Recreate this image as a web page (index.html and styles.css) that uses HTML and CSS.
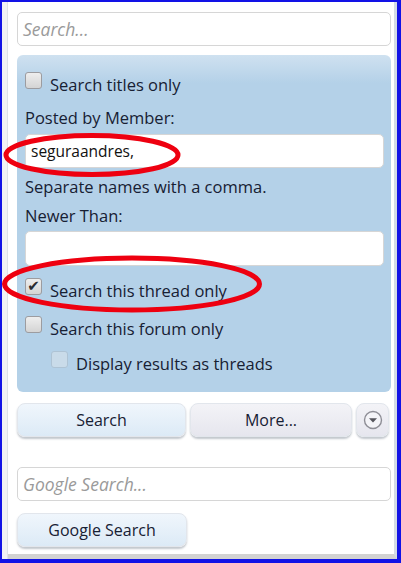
FILE: index.html
```html
<!DOCTYPE html>
<html>
<head>
<meta charset="utf-8">
<link rel="stylesheet" href="styles.css">
</head>
<body>
<div class="frame">
  <div class="strip"></div>
  <div class="menu">
    <div class="field search-field"><span class="ph">Search...</span></div>
    <div class="panel">
      <div class="check-row row-titles">
        <span class="box"></span><span class="label">Search titles only</span>
      </div>
      <div class="text-line posted">Posted by Member:</div>
      <div class="field member-field"><span class="val">seguraandres,</span></div>
      <div class="text-line hint">Separate names with a comma.</div>
      <div class="text-line newer">Newer Than:</div>
      <div class="field newer-field"></div>
      <div class="check-row row-thread">
        <span class="box checked">&#10004;</span><span class="label">Search this thread only</span>
      </div>
      <div class="check-row row-forum">
        <span class="box"></span><span class="label">Search this forum only</span>
      </div>
      <div class="check-row row-display">
        <span class="box disabled"></span><span class="label">Display results as threads</span>
      </div>
    </div>
    <div class="buttons">
      <div class="btn btn-primary btn-search">Search</div>
      <div class="btn btn-more">More...</div>
      <div class="btn btn-arrow">
        <svg width="20" height="20" viewBox="0 0 20 20">
          <circle cx="10" cy="10" r="8.5" fill="#f4f4f8" stroke="#8e8e96" stroke-width="1.4"/>
          <path d="M6 8.2 L14 8.2 L10 12.6 Z" fill="#55555c"/>
        </svg>
      </div>
    </div>
    <div class="field google-field"><span class="ph">Google Search...</span></div>
    <div class="btn btn-primary btn-google">Google Search</div>
  </div>
  <svg class="marks" width="401" height="563" viewBox="0 0 401 563">
    <ellipse cx="92" cy="155" rx="86" ry="19.5" fill="none" stroke="#ee0010" stroke-width="5"/>
    <ellipse cx="132" cy="284" rx="127.5" ry="26" fill="none" stroke="#ee0010" stroke-width="5"/>
  </svg>
</div>
</body>
</html>
```

FILE: styles.css
```css
html, body {
  margin: 0;
  padding: 0;
  background: #ffffff;
}

.frame {
  position: relative;
  width: 401px;
  height: 563px;
  box-sizing: border-box;
  border: 2px solid #1212e6;
  border-right-width: 4px;
  border-bottom-width: 4px;
  display: flex;
  background: #ffffff;
  font-family: "Open Sans", "Lato", sans-serif;
  font-size: 16.5px;
  color: #172033;
}

.strip {
  width: 5px;
  background: #f1f2f4;
  border-right: 1px solid #dde2e8;
  flex: none;
}

.menu {
  flex: 1;
  background: #ffffff;
  padding: 10px 3px 0 9px;
  border-right: 3px solid #d3dbe5;
  border-bottom: 5px solid #d2d2d2;
  display: flex;
  flex-direction: column;
}

.field {
  height: 34px;
  box-sizing: border-box;
  border: 1px solid #d6d6d6;
  border-radius: 5px;
  background: #ffffff;
  display: flex;
  align-items: center;
  padding-left: 5px;
}

.ph {
  font-style: italic;
  font-size: 17.5px;
  color: #9a9a9a;
}

.panel {
  margin-top: 9px;
  height: 337px;
  box-sizing: border-box;
  border-radius: 6px;
  background: linear-gradient(#cfe1f0 0px, #b4d1e8 28px, #b4d1e8 100%);
  padding: 17px 7px 0 8px;
  display: flex;
  flex-direction: column;
}

.check-row {
  display: flex;
  align-items: flex-start;
  height: 23px;
}

.box {
  width: 17px;
  height: 17px;
  box-sizing: border-box;
  border: 1px solid #9c9ca0;
  border-radius: 3px;
  background: linear-gradient(#eeeeee, #d4d4d4);
  flex: none;
  display: flex;
  align-items: center;
  justify-content: center;
  font-family: "DejaVu Sans", sans-serif;
  font-size: 15px;
  line-height: 1;
  color: #2a2a30;
}

.box.disabled {
  border-color: #aec3d4;
  background: #c9dbe9;
}

.label {
  margin-left: 8px;
  margin-top: 3px;
  line-height: 20px;
  white-space: nowrap;
}

.text-line {
  line-height: 20px;
  white-space: nowrap;
}

.posted { margin-top: 13px; }
.member-field { margin-top: 6px; }
.member-field .val { color: #111111; font-size: 15.5px; }
.hint { margin-top: 9px; }
.newer { margin-top: 9px; }
.newer-field { margin-top: 5px; height: 35px; }
.row-thread { margin-top: 12px; }
.row-forum { margin-top: 15px; }
.row-display { margin-top: 12px; margin-left: 26px; }

.buttons {
  display: flex;
  margin-top: 11px;
  height: 34px;
}

.btn {
  height: 34px;
  box-sizing: border-box;
  border-radius: 8px;
  border: 1px solid #e2e6ec;
  box-shadow: 0 2px 2px rgba(120, 130, 145, 0.45);
  display: flex;
  align-items: center;
  justify-content: center;
  color: #172033;
  font-size: 16px;
}

.btn-primary {
  background: linear-gradient(#f0f6fc, #dceaf6);
}

.btn-search { width: 169px; }

.btn-more {
  width: 162px;
  margin-left: 4px;
  background: linear-gradient(#f3f3f7, #e6e6ee);
}

.btn-arrow {
  width: 33px;
  margin-left: 4px;
  background: linear-gradient(#f3f3f7, #e6e6ee);
}

.google-field { margin-top: 30px; }

.btn-google {
  width: 170px;
  margin-top: 12px;
}

.marks {
  position: absolute;
  left: -2px;
  top: -2px;
  pointer-events: none;
}
```
